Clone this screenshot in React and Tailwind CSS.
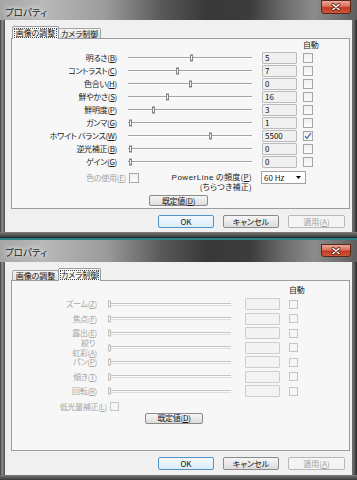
import React from 'react';

const FONT = "font-['Noto_Sans_CJK_JP','Liberation_Sans',sans-serif] [font-feature-settings:'palt']";
const LATIN = "font-['Liberation_Sans','Noto_Sans_CJK_JP',sans-serif]";

const imageRows = [
    { label: '明るさ', key: 'B', value: '5', pos: 63 },
    { label: 'コントラスト', key: 'C', value: '7', pos: 49 },
    { label: '色合い', key: 'H', value: '0', pos: 62 },
    { label: '鮮やかさ', key: 'S', value: '16', pos: 39 },
    { label: '鮮明度', key: 'P', value: '3', pos: 25 },
    { label: 'ガンマ', key: 'G', value: '1', pos: 2 },
    { label: 'ホワイト バランス', key: 'W', value: '5500', pos: 82, auto: true },
    { label: '逆光補正', key: 'B', value: '0', pos: 2 },
    { label: 'ゲイン', key: 'G', value: '0', pos: 2 },
];

const cameraRows = [
    { lines: ['ズーム'], key: 'Z' },
    { lines: ['焦点'], key: 'F' },
    { lines: ['露出'], key: 'E' },
    { lines: ['絞り', '虹彩'], key: 'A' },
    { lines: ['パン'], key: 'P' },
    { lines: ['傾き'], key: 'T' },
    { lines: ['回転'], key: 'R' },
];

// mnemonic "(X)" with underlined letter
const M = ({ k }) => (
    <>(<span className="underline underline-offset-1">{k}</span>)</>
);

const Slider = ({ pos, disabled }) => (
    <div className="relative h-full w-full flex items-center">
        {disabled ? (
            <div className="h-[3px] w-full border-t border-b border-t-[#c4c4c4] border-b-[#dcdcdc] bg-[#fbfbfb]" />
        ) : (
            <div className="h-[2px] w-full border-t border-[#a4a4a4] bg-white" />
        )}
        <div
            className={disabled
                ? "absolute top-1/2 -translate-y-1/2 h-[7px] w-[3px] border border-[#c2c2c2] bg-[#f6f6f6]"
                : "absolute top-1/2 -translate-y-1/2 h-[7px] w-[3px] border border-[#858585] bg-[#f4f4f4]"}
            style={{ left: pos - 1 }}
        />
    </div>
);

const Check = ({ checked, disabled }) => (
    <div className={disabled
        ? "w-[9px] h-[9px] border border-[#c6c6c6] bg-[#f6f6f6]"
        : "w-[10px] h-[10px] border border-[#a6a6a6] bg-linear-to-b from-[#f0f0f0] to-[#fbfbfb] flex items-center justify-center"}>
        {checked && (
            <svg width="8" height="8" viewBox="0 0 8 8">
                <path d="M1 4.2L3 6.3L7 1.2" fill="none" stroke="#4a64b8" strokeWidth="1.3" />
            </svg>
        )}
    </div>
);

const Box = ({ value, disabled }) => (
    <div className={disabled
        ? "w-[35px] h-[12px] border border-[#cdcdcd] rounded-[1px] bg-[#f3f3f3]"
        : "w-[35px] h-[12px] border border-[#bcbcbc] rounded-[1px] bg-[#f0f0f0] pl-[2px] text-[8px] leading-[10px] text-[#111]"}>
        {value}
    </div>
);

const Button = ({ kind = 'normal', className = '', children }) => {
    const base = "flex items-center justify-center rounded-[2px] border text-[8px] leading-none whitespace-nowrap";
    const look = kind === 'default'
        ? "border-[#4f93c8] bg-linear-to-b from-[#f3f9fe] to-[#d9edf9] text-[#111]"
        : kind === 'disabled'
            ? "border-[#b8b8b8] bg-[#f4f4f4] text-[#a0a0a0]"
            : "border-[#8a8a8a] bg-linear-to-b from-[#f6f6f6] to-[#dcdcdc] text-[#111]";
    return <div className={`${base} ${look} ${className}`}>{children}</div>;
};

const TitleBar = ({ heightClass, closeClass }) => (
    <div className={`flex w-[357px] ${heightClass} bg-[linear-gradient(to_right,#a6a6a6_0%,#b8b8b8_12%,#9a9a9a_30%,#5a5a5a_45%,#383838_58%,#3c3c3c_70%,#6e6e6e_80%,#8c8c8c_88%,#5e5e5e_100%)]`}>
        <div className="pl-[5px] pt-[4px] leading-[16px] text-[9.5px] text-[#1c1c1c] [text-shadow:0_0_4px_#fff,0_0_6px_#fff] flex-1">
            プロパティ
        </div>
        <div className={`${closeClass} w-[30px] mr-[6px] rounded-b-[3px] border border-[#5a2418] bg-[linear-gradient(to_bottom,#eaa898_0%,#d9705a_45%,#c0391f_55%,#d0583a_100%)] flex items-center justify-center`}>
            <svg width="10" height="8" viewBox="0 0 10 8">
                <path d="M2 1.5L8 6.5M8 1.5L2 6.5" stroke="#5a2014" strokeWidth="3" strokeLinecap="round" />
                <path d="M2 1.5L8 6.5M8 1.5L2 6.5" stroke="#ffffff" strokeWidth="1.6" strokeLinecap="round" />
            </svg>
        </div>
    </div>
);

const Tabs = ({ active }) => {
    const sel = "relative z-10 h-[13px] -mb-[1px] border border-b-0 border-[#999ca3] rounded-t-[2px] bg-[#f7f7f7] p-[1px]";
    const off = "h-[10px] border border-b-0 border-[#a3a3a3] rounded-t-[2px] bg-linear-to-b from-[#f4f4f4] to-[#e2e2e2] flex items-center justify-center";
    const focus = "h-full border border-dotted border-[#444] flex items-center justify-center";
    const tabs = [
        { name: '画像の調整', w: 'w-[47px]' },
        { name: 'カメラ制御', w: 'w-[43px] -ml-[1px]' },
    ];
    return (
        <div className="flex items-end h-[12px] ml-[7px] text-[8px] leading-none text-[#111] whitespace-nowrap">
            {tabs.map((t, i) => (
                <div key={t.name} className={`${t.w} ${i === active ? sel : off}`}>
                    {i === active ? <div className={focus}>{t.name}</div> : t.name}
                </div>
            ))}
        </div>
    );
};

const Footer = () => (
    <div className="flex justify-end gap-[9px] mt-[6px] pr-[7px] h-[13px]">
        <Button kind="default" className="w-[56px]">OK</Button>
        <Button className="w-[56px]">キャンセル</Button>
        <Button kind="disabled" className="w-[57px]">適用<M k="A" /></Button>
    </div>
);

const Window = ({ titleClass, closeClass, clientClass, bottom, children }) => (
    <div className="flex flex-col w-[357px] h-[240px]">
        <TitleBar heightClass={titleClass} closeClass={closeClass} />
        <div className="flex flex-1">
            <div className="w-[5px] bg-linear-to-r from-[#3a3a3a] via-[#8e8e8e] to-[#6a6a6a] border-r border-[#5a5a5a]" />
            <div className={`w-[347px] ${clientClass} bg-[#f0f0f0] flex flex-col pt-[6px]`}>
                {children}
            </div>
            <div className="w-[5px] bg-linear-to-r from-[#7a7a7a] via-[#4a4a4a] to-[#2a2a2a] border-l border-[#6a6a6a]" />
        </div>
        {bottom}
    </div>
);

const ImagePanel = () => (
    <div className="ml-[6px] w-[339px] h-[171px] border border-[#999ca3] bg-[#f7f7f7] flex flex-col text-[8px] leading-none tracking-[-0.3px] text-[#1a1a1a]">
        <div className="mt-[1px] h-[10px] ml-[291px] flex items-center whitespace-nowrap">自動</div>
        <div className="mt-[1px] flex flex-col">
            {imageRows.map((r) => (
                <div key={r.label} className="flex items-center h-[13px]">
                    <div className="w-[105px] text-right whitespace-nowrap">{r.label}<M k={r.key} /></div>
                    <div className="ml-[11px] w-[124px] h-full"><Slider pos={r.pos} /></div>
                    <div className="ml-[10px] tracking-normal"><Box value={r.value} /></div>
                    <div className="ml-[6px]"><Check checked={r.auto} /></div>
                </div>
            ))}
        </div>
        <div className="mt-[2px] h-[19px] flex items-start">
            <div className="w-[127px] mt-[3px] h-[10px] flex items-center justify-end gap-[3px]">
                <span className="text-[#a3a3a3] whitespace-nowrap">色の使用<M k="E" /></span>
                <Check />
            </div>
            <div className="w-[113px] mt-[2px] text-right leading-[9px] whitespace-nowrap tracking-[0.3px]">
                <div><span className={`${LATIN} tracking-[0.5px]`}>PowerLine</span> の頻度<M k="P" /></div>
                <div>(ちらつき補正)</div>
            </div>
            <div className="ml-[9px] mt-[1px] w-[45px] h-[13px] border border-[#a0a0a0] bg-white flex items-center justify-between pl-[2px] pr-[4px] tracking-normal">
                <span>60 Hz</span>
                <svg width="5" height="3" viewBox="0 0 5 3"><path d="M0 0H5L2.5 3Z" fill="#000" /></svg>
            </div>
        </div>
        <Button className="mt-[6px] ml-[137px] w-[59px] h-[11px]">既定値<M k="D" /></Button>
    </div>
);

const CameraPanel = () => (
    <div className="ml-[6px] w-[339px] h-[171px] border border-[#999ca3] bg-[#f7f7f7] flex flex-col text-[8px] leading-none tracking-[-0.3px] text-[#a6a6a6]">
        <div className="mt-[4px] h-[10px] ml-[277px] flex items-center whitespace-nowrap text-[#1a1a1a]">自動</div>
        <div className="mt-[2px] flex flex-col">
            {cameraRows.map((r) => (
                <div key={r.key} className="flex items-center h-[14.5px]">
                    <div className="w-[85px] text-right whitespace-nowrap leading-[10px]">
                        {r.lines.length > 1 && <div className="pr-[2px]">{r.lines[0]}</div>}
                        <div>{r.lines[r.lines.length - 1]}<M k={r.key} /></div>
                    </div>
                    <div className="ml-[11px] w-[123px] h-full"><Slider pos={1} disabled /></div>
                    <div className="ml-[14px]"><Box disabled /></div>
                    <div className="ml-[9px]"><Check disabled /></div>
                </div>
            ))}
        </div>
        <div className="mt-[3px] w-[107px] h-[10px] flex items-center justify-end gap-[3px]">
            <span className="whitespace-nowrap">低光量補正<M k="L" /></span>
            <Check disabled />
        </div>
        <Button className="mt-[1px] ml-[133px] w-[58px] h-[11px]">既定値<M k="D" /></Button>
    </div>
);

export default function App() {
    return (
        <div className={`w-[357px] h-[480px] overflow-hidden bg-[#2a2a2a] ${FONT}`}>
            <Window
                titleClass="h-[20px]"
                closeClass="h-[14px]"
                clientClass="h-[212px]"
                bottom={
                    <div className="flex flex-col h-[8px]">
                        <div className="h-[5px] bg-linear-to-b from-[#7e7e7e] to-[#3c3c3c]" />
                        <div className="h-[1px] bg-[#1e2a2a]" />
                        <div className="h-[2px] bg-[#2c7f86]" />
                    </div>
                }
            >
                <Tabs active={0} />
                <ImagePanel />
                <Footer />
            </Window>
            <Window
                titleClass="h-[22px]"
                closeClass="mt-[4px] h-[13px]"
                clientClass="h-[213px]"
                bottom={<div className="h-[5px] bg-linear-to-b from-[#7a7a7a] to-[#3a3a3a]" />}
            >
                <Tabs active={1} />
                <CameraPanel />
                <Footer />
            </Window>
        </div>
    );
}
